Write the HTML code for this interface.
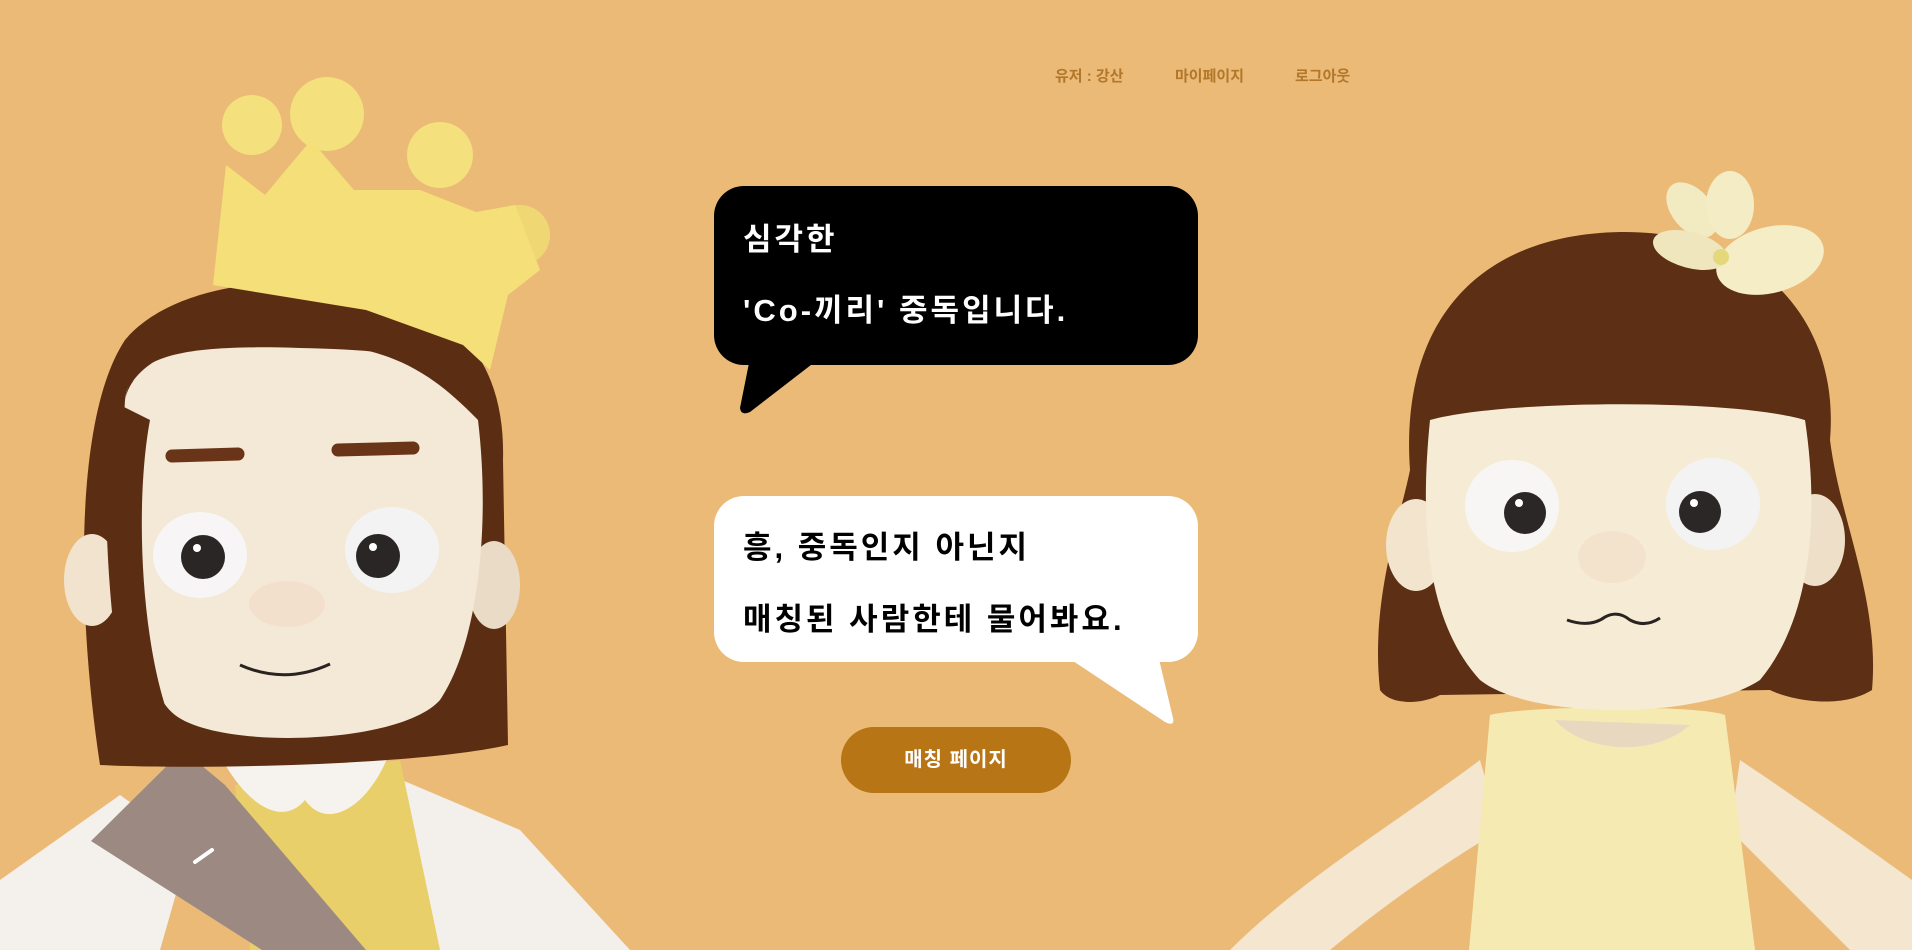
<!DOCTYPE html>
<html><head><meta charset="utf-8">
<style>
html,body{margin:0;padding:0;width:1912px;height:950px;overflow:hidden;background:#ebba77;}
body{position:relative;font-family:"Liberation Sans","Noto Sans CJK KR",sans-serif;}
svg{position:absolute;left:0;top:0;}
.nav{position:absolute;top:65px;font-size:15px;font-weight:bold;color:#b2772a;white-space:nowrap;}
.t{position:absolute;font-size:31px;font-weight:bold;white-space:nowrap;letter-spacing:3px;line-height:1;}
.btn{position:absolute;left:841px;top:727px;width:230px;height:66px;border-radius:33px;background:#b87516;color:#fff;font-size:20px;font-weight:bold;text-align:center;line-height:66px;letter-spacing:1px;}
</style></head><body>
<svg width="1912" height="950" viewBox="0 0 1912 950">
<!-- LEFT CHARACTER -->
<path d="M0,880 L120,795 L190,845 L160,950 L0,950 Z" fill="#f4f1ec"/>
<path d="M390,775 L520,830 L630,950 L420,950 Z" fill="#f3efea"/>
<path d="M235,785 L400,760 L440,950 L250,950 Z" fill="#e8cf6a"/>
<path d="M91,841 L183,750 L225,785 L366,950 L262,950 Z" fill="#9c8a82"/>
<path d="M195,862 L212,850" stroke="#fff" stroke-width="4" stroke-linecap="round"/>
<path d="M215,745 C240,800 280,830 305,800 C330,835 375,800 392,745 Z" fill="#f6f3ee"/>
<path d="M100,765 C78,620 72,420 125,340 C180,275 320,270 410,300 C480,330 505,390 503,460 L508,745 C420,765 200,770 100,765 Z" fill="#5b2e13"/>
<ellipse cx="92" cy="580" rx="28" ry="46" fill="#f2e3cf"/>
<ellipse cx="494" cy="585" rx="26" ry="44" fill="#eadbc6"/>
<path d="M125,400 C130,350 200,345 300,348 C410,350 470,360 478,420 C490,520 480,640 440,700 C400,745 220,750 175,715 C130,680 118,520 125,400 Z" fill="#f4e8d6"/>
<path d="M125,400 C135,350 220,330 300,340 C380,348 420,360 478,420 L480,380 C460,320 380,300 300,300 C200,300 140,320 125,400 Z" fill="#5b2e13"/>
<path d="M110,400 C100,500 110,650 130,720 L170,720 C140,640 135,500 150,420 Z" fill="#5b2e13"/>
<circle cx="252" cy="125" r="30" fill="#f4e07c"/>
<circle cx="327" cy="114" r="37" fill="#f4e07c"/>
<circle cx="440" cy="155" r="33" fill="#f4e07c"/>
<circle cx="520" cy="235" r="30" fill="#efd873"/>
<path d="M213,285 L226,165 L265,195 L311,140 L354,190 L420,190 L476,212 L515,205 L540,270 L508,295 L490,370 L463,345 L366,310 Z" fill="#f4df78"/>
<path d="M172,456 L238,454" stroke="#6a3418" stroke-width="13" stroke-linecap="round"/>
<path d="M338,450 L413,448" stroke="#6a3418" stroke-width="13" stroke-linecap="round"/>
<ellipse cx="200" cy="555" rx="47" ry="43" fill="#f7f5f5"/>
<ellipse cx="392" cy="550" rx="47" ry="43" fill="#f4f3f4"/>
<circle cx="203" cy="557" r="22" fill="#2a2626"/>
<circle cx="378" cy="556" r="22" fill="#2a2626"/>
<circle cx="197" cy="548" r="4" fill="#fff"/>
<circle cx="373" cy="547" r="4" fill="#fff"/>
<ellipse cx="287" cy="604" rx="38" ry="23" fill="#f3e0cc"/>
<path d="M240,665 Q285,685 330,664" stroke="#2a2420" stroke-width="3" fill="none"/>

<!-- RIGHT CHARACTER -->
<path d="M1480,760 C1400,820 1300,880 1230,950 L1330,950 C1390,900 1450,860 1500,830 Z" fill="#f4e6cf"/>
<path d="M1740,760 C1800,800 1870,850 1912,880 L1912,950 L1850,950 C1800,900 1760,860 1730,830 Z" fill="#f4e6cf"/>
<path d="M1490,715 C1530,705 1700,705 1725,715 L1755,950 L1469,950 Z" fill="#f5ebb2"/>
<path d="M1555,720 C1580,750 1650,760 1690,725 Z" fill="#e8d8c0"/>
<path d="M1380,690 C1370,600 1400,520 1410,470 C1400,330 1470,235 1620,232 C1760,230 1840,320 1830,440 C1840,520 1880,600 1872,690 C1840,710 1790,700 1770,690 L1440,695 C1420,705 1390,705 1380,690 Z" fill="#5d2f14"/>
<ellipse cx="1416" cy="545" rx="30" ry="46" fill="#f2e4cd"/>
<ellipse cx="1815" cy="540" rx="30" ry="46" fill="#eee0c8"/>
<path d="M1430,420 C1500,400 1730,398 1805,420 C1820,520 1810,620 1760,680 C1700,720 1530,720 1480,680 C1425,620 1420,520 1430,420 Z" fill="#f6ecd6"/>
<path d="M1420,430 C1440,390 1470,380 1500,395 L1560,405 L1660,402 L1760,405 L1820,425 C1820,360 1760,300 1620,300 C1490,300 1425,360 1420,430 Z" fill="#5d2f14"/>
<ellipse cx="1692" cy="210" rx="20" ry="32" transform="rotate(-40 1692 210)" fill="#f2eac0"/>
<ellipse cx="1730" cy="205" rx="24" ry="34" fill="#f3ecc4"/>
<ellipse cx="1770" cy="260" rx="55" ry="33" transform="rotate(-15 1770 260)" fill="#f4edc6"/>
<ellipse cx="1690" cy="250" rx="38" ry="18" transform="rotate(15 1690 250)" fill="#efe6bd"/>
<circle cx="1721" cy="257" r="8" fill="#e4d87a"/>
<ellipse cx="1512" cy="506" rx="47" ry="46" fill="#f8f6f4"/>
<ellipse cx="1713" cy="504" rx="47" ry="46" fill="#f4f3f4"/>
<circle cx="1525" cy="513" r="21" fill="#2b2727"/>
<circle cx="1700" cy="512" r="21" fill="#2b2727"/>
<circle cx="1519" cy="503" r="4" fill="#fff"/>
<circle cx="1694" cy="503" r="4" fill="#fff"/>
<ellipse cx="1612" cy="557" rx="34" ry="26" fill="#f4e3cc"/>
<path d="M1567,620 Q1590,628 1605,617 Q1618,610 1630,620 Q1645,628 1660,618" stroke="#2a2420" stroke-width="3" fill="none"/>

<!-- BUBBLES -->
<rect x="714" y="186" width="484" height="179" rx="30" fill="#000"/>
<path d="M750,358 L740,408 Q741,416 750,412 L820,358 Z" fill="#000"/>
<rect x="714" y="496" width="484" height="166" rx="30" fill="#fff"/>
<path d="M1064,655 L1165,722 Q1175,727 1173,718 L1158,655 Z" fill="#fff"/>
</svg>

<div class="nav" style="left:1055px">유저 : 강산</div>
<div class="nav" style="left:1175px">마이페이지</div>
<div class="nav" style="left:1295px">로그아웃</div>

<div class="t" style="left:743px;top:224px;color:#fff;">심각한</div>
<div class="t" style="left:743px;top:295px;color:#fff;">'Co-끼리' 중독입니다.</div>
<div class="t" style="left:743px;top:532px;color:#000;">흥, 중독인지 아닌지</div>
<div class="t" style="left:743px;top:604px;color:#000;">매칭된 사람한테 물어봐요.</div>

<div class="btn">매칭 페이지</div>
</body></html>
